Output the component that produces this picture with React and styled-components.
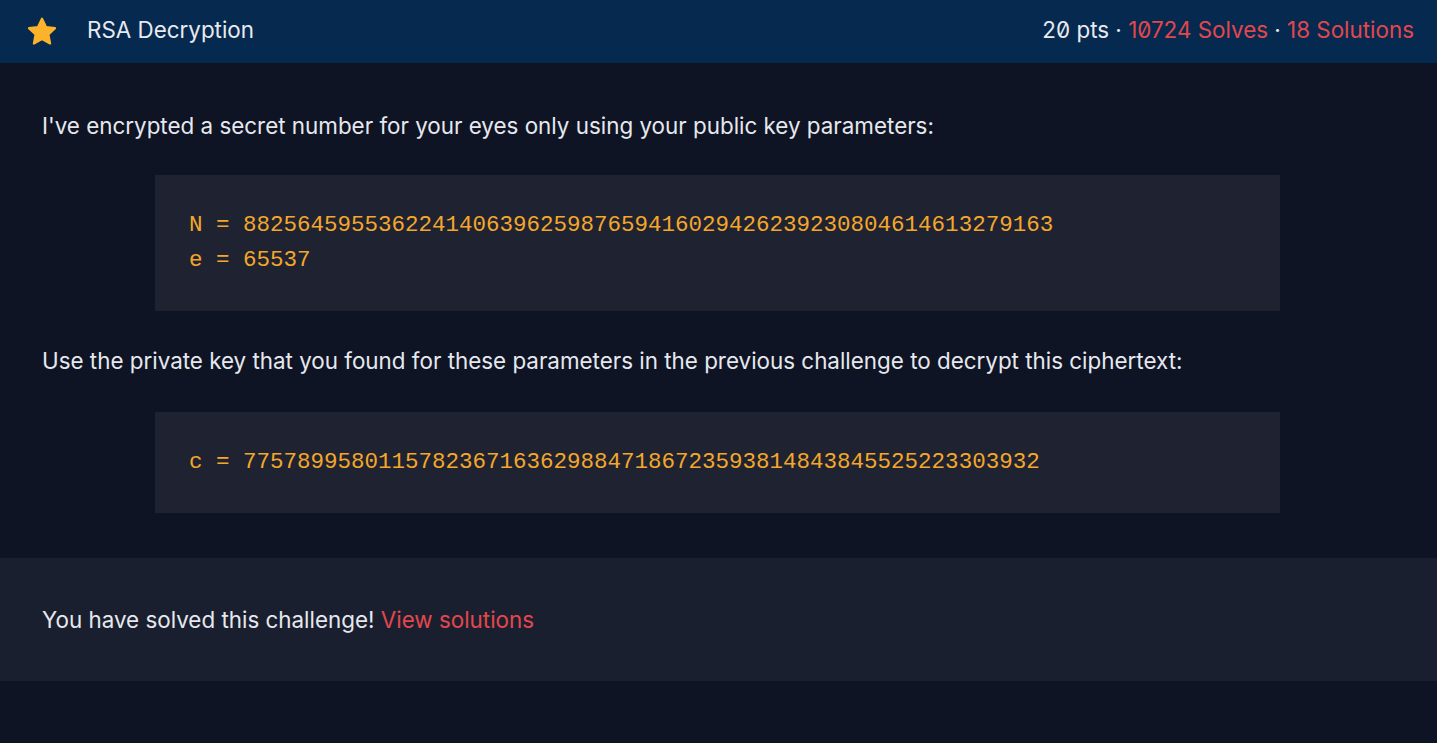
import styled, { createGlobalStyle } from "styled-components";

const GlobalStyle = createGlobalStyle`
  body {
    margin: 0;
    background: #0e1424;
    font-family: Inter, "Noto Sans", sans-serif;
    color: #e6e8ee;
  }
`;

const Page = styled.div`
  min-height: 743px;
  background: #0e1424;
`;

const Header = styled.header`
  height: 63px;
  box-sizing: border-box;
  background: #05294f;
  display: flex;
  align-items: center;
  padding: 0 23px 5px 25px;
`;

const Star = styled.svg`
  width: 34px;
  height: 34px;
  flex-shrink: 0;
  margin-top: 5px;
`;

const Title = styled.h1`
  margin: 0 0 0 28px;
  font-size: 22.4px;
  font-weight: 400;
  color: #e8eaf0;
  flex: 1;
`;

const Meta = styled.div`
  font-size: 22.4px;
  font-feature-settings: "zero";
  color: #e8eaf0;
`;

const Red = styled.span`
  color: #e2474d;
`;

const Content = styled.main`
  padding: 48px 42px 45px;
`;

const Para = styled.p`
  margin: 0;
  font-size: 22.4px;
  line-height: 30px;
`;

const CodeBlock = styled.pre`
  margin: ${(p) => (p.last ? "36px 115px 0 113px" : "34px 115px 35px 113px")};
  padding: 33px 34px;
  background: #1f2331;
  color: #f4a72a;
  font-family: "Liberation Mono", "DejaVu Sans Mono", monospace;
  font-size: 22.5px;
  line-height: 35px;
  white-space: pre;
`;

const Footer = styled.section`
  background: #1a1f2f;
  padding: 47px 42px 46px;
  font-size: 22.4px;
  line-height: 30px;
`;

const Link = styled.a`
  color: #e2474d;
  text-decoration: none;
`;

export default function App() {
  return (
    <Page>
      <GlobalStyle />
      <Header>
        <Star viewBox="0 0 24 24">
          <path
            d="M12 2.6l2.8 5.9 6.4.8-4.7 4.4 1.2 6.4L12 17l-5.7 3.1 1.2-6.4-4.7-4.4 6.4-.8z"
            fill="#fdb22c"
            stroke="#fdb22c"
            strokeWidth="1.6"
            strokeLinejoin="round"
          />
        </Star>
        <Title>RSA Decryption</Title>
        <Meta>
          20 pts · <Red>10724 Solves</Red> · <Red>18 Solutions</Red>
        </Meta>
      </Header>
      <Content>
        <Para>I've encrypted a secret number for your eyes only using your public key parameters:</Para>
        <CodeBlock>
          {"N = 882564595536224140639625987659416029426239230804614613279163\ne = 65537"}
        </CodeBlock>
        <Para>Use the private key that you found for these parameters in the previous challenge to decrypt this ciphertext:</Para>
        <CodeBlock last>{"c = 77578995801157823671636298847186723593814843845525223303932"}</CodeBlock>
      </Content>
      <Footer>
        You have solved this challenge! <Link href="#">View solutions</Link>
      </Footer>
    </Page>
  );
}
